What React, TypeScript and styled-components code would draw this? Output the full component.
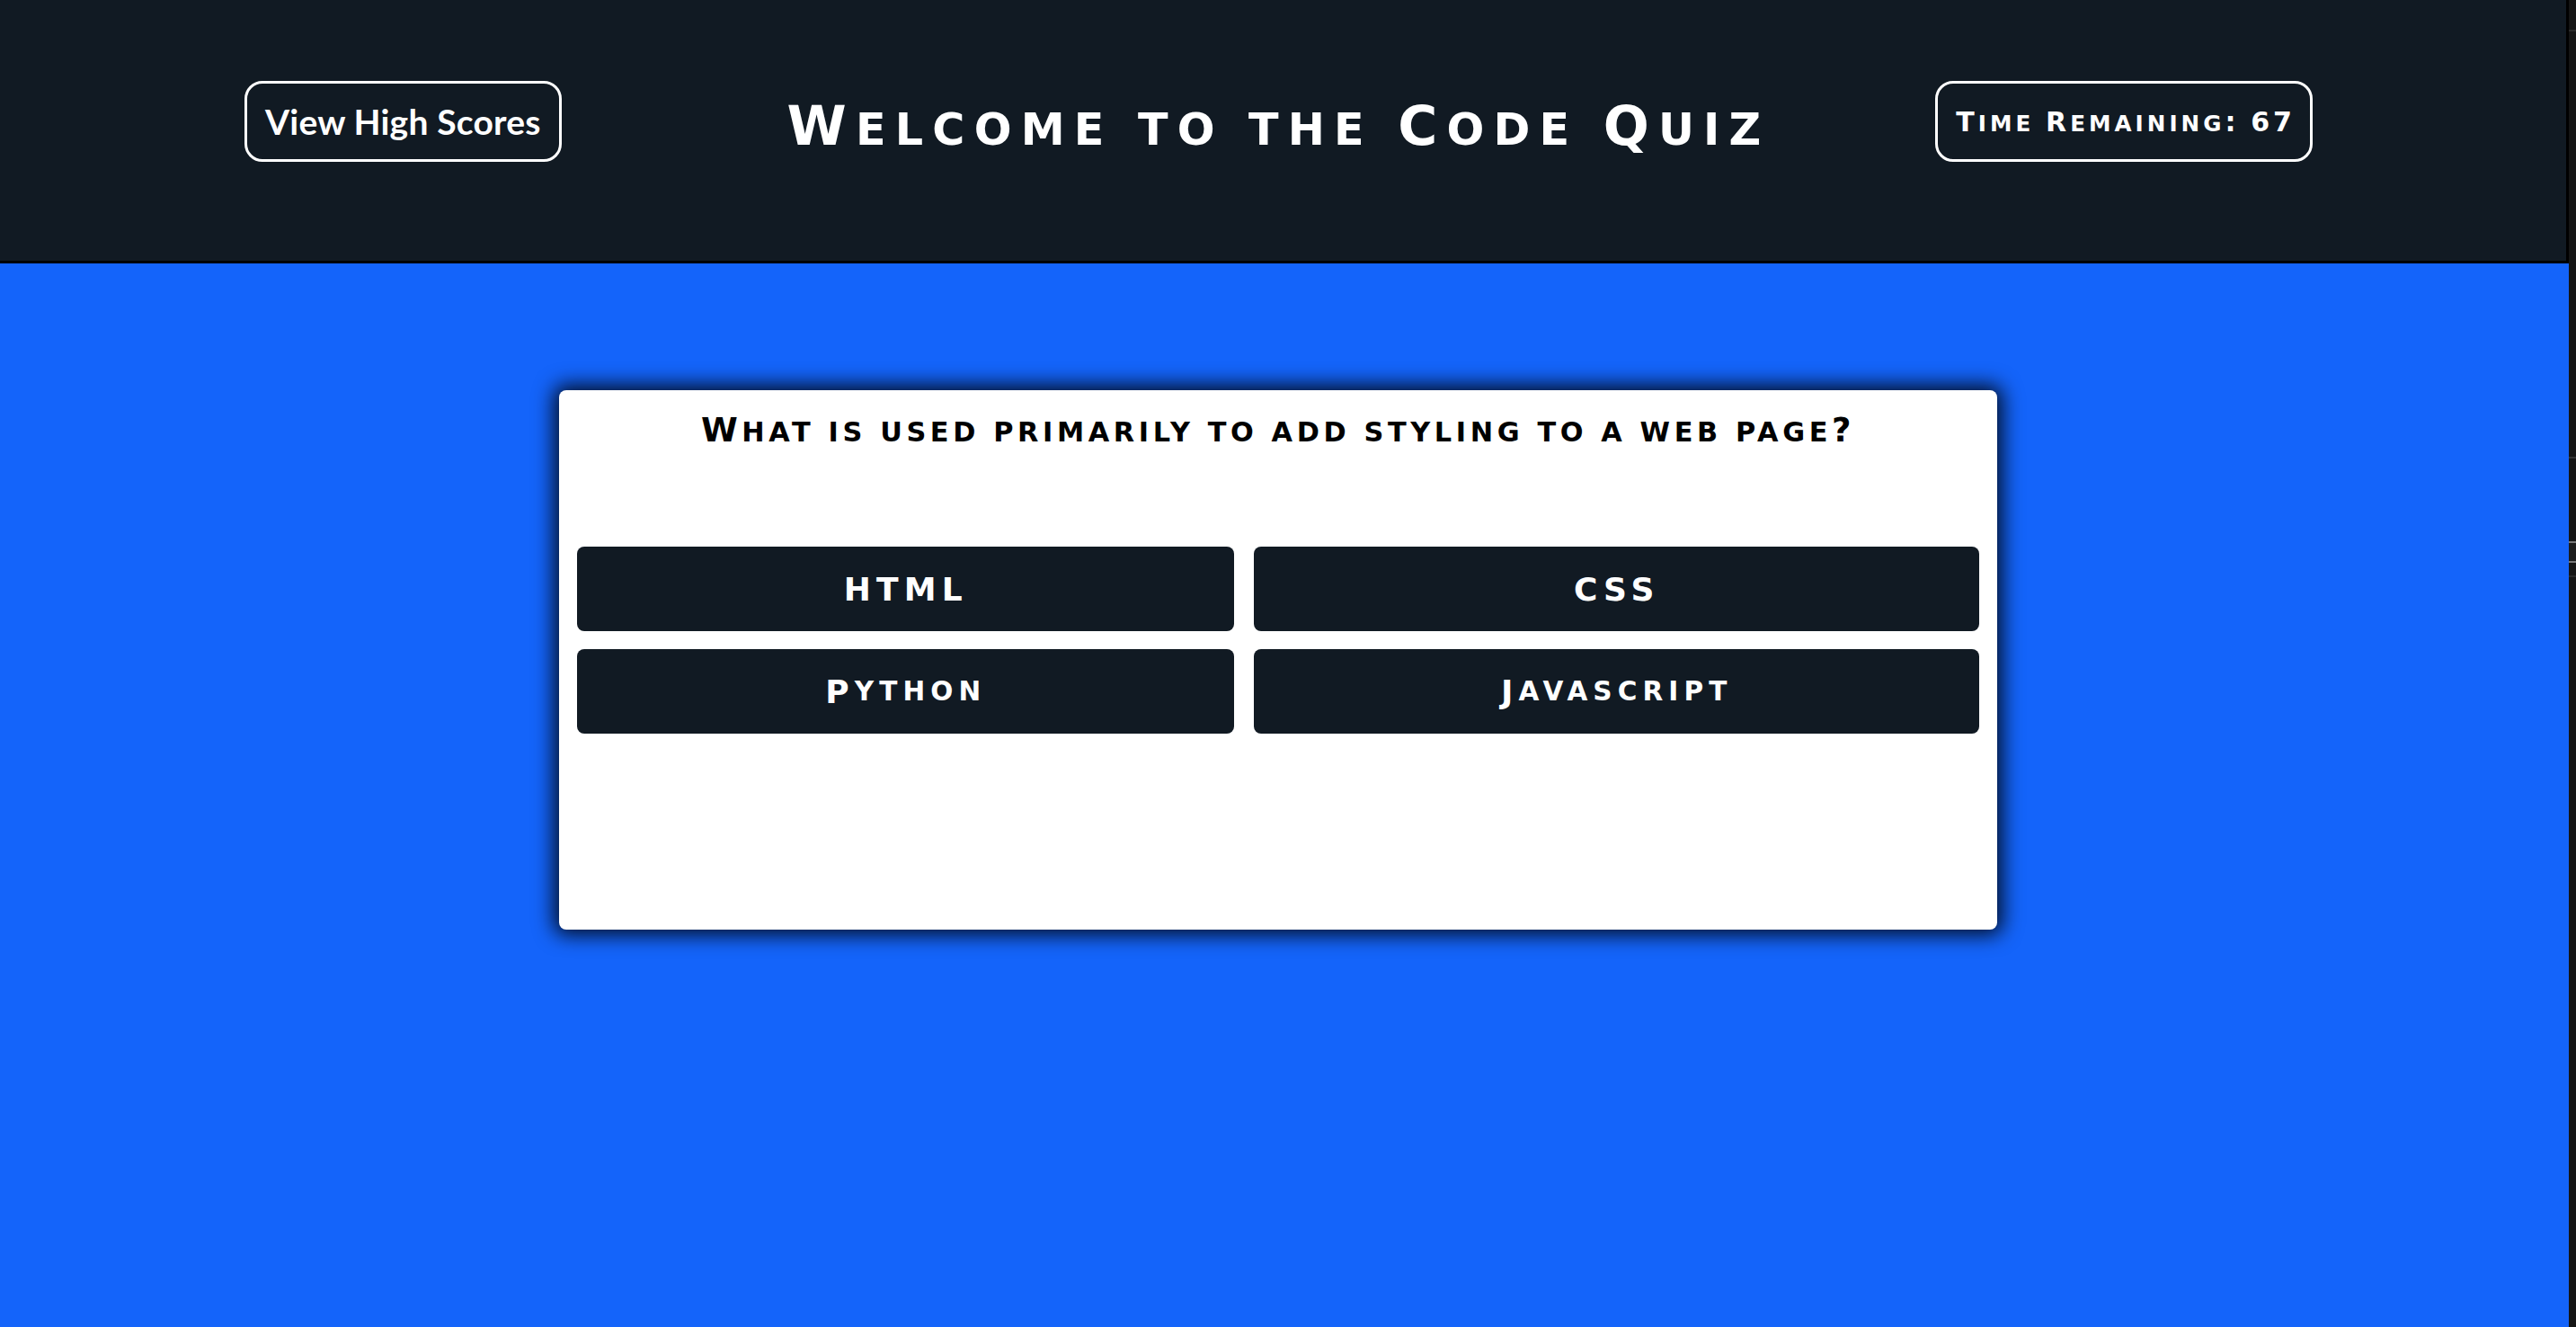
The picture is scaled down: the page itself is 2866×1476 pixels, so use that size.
import React from "react";
import styled, { createGlobalStyle } from "styled-components";

const GlobalStyle = createGlobalStyle`
  html, body {
    margin: 0;
    padding: 0;
  }
  body {
    background: #1464fa;
    overflow: hidden;
  }
  * { box-sizing: border-box; }
`;

const COPPER = `"DejaVu Sans", "Liberation Sans", sans-serif`;

const Shell = styled.div`
  display: flex;
  width: 2866px;
  height: 1476px;
  overflow: hidden;
`;

const Page = styled.div`
  flex: 1;
  min-width: 0;
  display: flex;
  flex-direction: column;
  background: #1464fa;
`;

const Header = styled.header`
  height: 293px;
  flex: none;
  background: #111a23;
  border-bottom: 3px solid #000;
  border-right: 3px solid #000;
  padding: 90px 282px 0 272px;
  display: grid;
  grid-template-columns: 1fr auto 1fr;
  align-items: start;
`;

const OutlineButton = styled.button<{ $align: "start" | "end" }>`
  justify-self: ${(p) => p.$align};
  height: 90px;
  padding: 0 20px;
  background: transparent;
  color: #fff;
  border: 3px solid #fff;
  border-radius: 20px;
  display: flex;
  align-items: center;
  justify-content: center;
  cursor: pointer;
  white-space: nowrap;
`;

const ScoresLabel = styled.span`
  font-family: Lato, "Open Sans", sans-serif;
  font-weight: 700;
  font-size: 39px;
  letter-spacing: 0.2px;
`;

const TimerLabel = styled.span`
  font-family: ${COPPER};
  font-weight: 700;
  font-size: 30px;
  letter-spacing: 0.135em;
  margin-right: -0.135em;
`;

const Title = styled.h1`
  margin: 15px 0 0;
  font-family: ${COPPER};
  font-weight: 700;
  font-size: 60px;
  line-height: 70px;
  color: #fff;
  letter-spacing: 0.17em;
  white-space: nowrap;
  text-align: center;
`;

const Small = styled.span`
  font-size: 0.82em;
  text-transform: uppercase;
`;

const Main = styled.main`
  flex: 1;
  padding: 141px 14px 0 0;
  display: flex;
  justify-content: center;
  align-items: flex-start;
`;

const Card = styled.section`
  width: 1600px;
  height: 600px;
  background: #fff;
  border-radius: 8px;
  padding: 20px;
  box-shadow: 0 0 22px 6px rgba(0, 0, 0, 0.85);
  display: flex;
  flex-direction: column;
`;

const Question = styled.h2`
  margin: 0;
  font-family: ${COPPER};
  font-weight: 700;
  font-size: 37px;
  line-height: 50px;
  color: #000;
  text-align: center;
  letter-spacing: 0.125em;
  white-space: nowrap;
`;

const Answers = styled.div`
  margin-top: 102px;
  display: grid;
  grid-template-columns: minmax(0, 731fr) minmax(0, 806fr);
  grid-auto-rows: 94px;
  column-gap: 22px;
  row-gap: 20px;
`;

const AnswerButton = styled.button`
  background: #111a23;
  color: #fff;
  border: none;
  border-radius: 8px;
  font-family: ${COPPER};
  font-weight: 700;
  font-size: 36px;
  letter-spacing: 0.17em;
  display: flex;
  align-items: center;
  justify-content: center;
  cursor: pointer;
`;

const SideStrip = styled.aside`
  width: 8px;
  flex: none;
  background: #151515;
  display: flex;
  flex-direction: column;
`;

const StripRule = styled.div<{ $top: number; $tone: string }>`
  margin-top: ${(p) => p.$top}px;
  height: 2px;
  background: ${(p) => p.$tone};
`;

const StripTab = styled.div`
  margin-top: 92px;
  height: 24px;
  border-top: 2px solid #777;
  border-bottom: 2px solid #777;
  background: #1b1b1b;
`;

function SmallCaps({ text }: { text: string }) {
  const runs: { small: boolean; value: string }[] = [];
  for (const ch of text) {
    const small = /[a-z\s]/.test(ch);
    const last = runs[runs.length - 1];
    if (last && last.small === small) last.value += ch;
    else runs.push({ small, value: ch });
  }
  return (
    <>
      {runs.map((r, i) =>
        r.small ? <Small key={i}>{r.value}</Small> : <React.Fragment key={i}>{r.value}</React.Fragment>
      )}
    </>
  );
}

const answers = ["HTML", "CSS", "Python", "Javascript"];

export default function App() {
  return (
    <>
      <GlobalStyle />
      <Shell>
        <Page>
          <Header>
            <OutlineButton $align="start">
              <ScoresLabel>View High Scores</ScoresLabel>
            </OutlineButton>
            <Title>
              <SmallCaps text="Welcome to the Code Quiz" />
            </Title>
            <OutlineButton $align="end">
              <TimerLabel>
                <SmallCaps text="Time Remaining: 67" />
              </TimerLabel>
            </OutlineButton>
          </Header>
          <Main>
            <Card>
              <Question>
                <SmallCaps text="What is used primarily to add styling to a web page?" />
              </Question>
              <Answers>
                {answers.map((a) => (
                  <AnswerButton key={a}>
                    <SmallCaps text={a} />
                  </AnswerButton>
                ))}
              </Answers>
            </Card>
          </Main>
        </Page>
        <SideStrip>
          <StripRule $top={33} $tone="#2a2a2a" />
          <StripRule $top={473} $tone="#333" />
          <StripTab />
          <StripRule $top={14} $tone="#2a2a2a" />
        </SideStrip>
      </Shell>
    </>
  );
}
